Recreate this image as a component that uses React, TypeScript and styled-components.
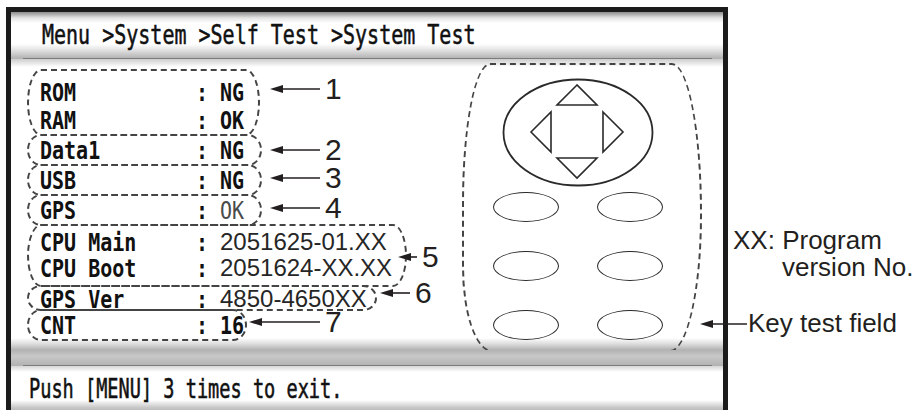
import React from 'react'
import styled, { createGlobalStyle } from 'styled-components'

type Kind = 'lcd' | 'thin' | 'plain'

type Row = {
  label: string
  value: string
  kind: Kind
}

type Group = {
  rows: Row[]
  w: number
  pt: number
  pb: number
  rowH: number
  callY: number
  gap: number
  len: number
  num: string
}

const groups: Group[] = [
  {
    rows: [
      { label: 'ROM', value: 'NG', kind: 'lcd' },
      { label: 'RAM', value: 'OK', kind: 'lcd' },
    ],
    w: 233, pt: 7, pb: 0, rowH: 28, callY: 7, gap: 10, len: 50, num: '1',
  },
  { rows: [{ label: 'Data1', value: 'NG', kind: 'lcd' }], w: 235, pt: 0, pb: 0, rowH: 28, callY: 3, gap: 8, len: 50, num: '2' },
  { rows: [{ label: 'USB', value: 'NG', kind: 'lcd' }], w: 235, pt: 0, pb: 0, rowH: 28, callY: 1, gap: 8, len: 50, num: '3' },
  { rows: [{ label: 'GPS', value: 'OK', kind: 'thin' }], w: 235, pt: 0, pb: 0, rowH: 28, callY: 1, gap: 8, len: 50, num: '4' },
  {
    rows: [
      { label: 'CPU Main', value: '2051625-01.XX', kind: 'plain' },
      { label: 'CPU Boot', value: '2051624-XX.XX', kind: 'plain' },
    ],
    w: 380, pt: 3, pb: 4, rowH: 26, callY: 20, gap: -9, len: 19, num: '5',
  },
  { rows: [{ label: 'GPS Ver', value: '4850-4650XX', kind: 'plain' }], w: 350, pt: 0, pb: 0, rowH: 22, callY: -5, gap: 3, len: 30, num: '6' },
  { rows: [{ label: 'CNT', value: '16', kind: 'lcd' }], w: 220, pt: 0, pb: 0, rowH: 28, callY: 0, gap: 2, len: 71, num: '7' },
]

const GlobalStyle = createGlobalStyle`
  html, body {
    margin: 0;
    padding: 0;
    background: #fff;
    overflow: hidden;
  }
  body {
    font-family: 'Liberation Sans', Arial, sans-serif;
    color: #231f20;
  }
`

const Arrow: React.FC<{ len: number }> = ({ len }) => (
  <svg width={len} height={10} viewBox={`0 0 ${len} 10`}>
    <line x1={10} y1={5} x2={len} y2={5} stroke="#231f20" strokeWidth={1.6} />
    <polygon points="0,5 13,1 13,9" fill="#231f20" />
  </svg>
)

const DPad = () => (
  <svg width={152} height={109} viewBox="0 0 152 109">
    <g fill="none" stroke="#2a2a2a" strokeWidth={1.6} strokeLinejoin="miter">
      <ellipse cx={76} cy={54.5} rx={74.5} ry={53} strokeWidth={1.8} />
      <polygon points="75,7 55,27 95,27" />
      <polygon points="55,80 95,80 75,100" />
      <polygon points="29,54 49,34 49,74" />
      <polygon points="101,34 121,54 101,74" />
    </g>
  </svg>
)

export default function App() {
  return (
    <Page>
      <GlobalStyle />
      <Frame>
        <Header>
          <Title>
            <Lcd $tall>Menu &gt;System &gt;Self Test &gt;System Test</Lcd>
          </Title>
          <Rule />
        </Header>
        <Body>
          <Groups>
            {groups.map((g) => (
              <GroupRow key={g.num}>
                <Box $w={g.w} $pt={g.pt} $pb={g.pb}>
                  {g.rows.map((r) => (
                    <ItemRow key={r.label} $h={g.rowH}>
                      <Lcd $bold>{r.label}</Lcd>
                      <Lcd $bold>:</Lcd>
                      {r.kind === 'plain' ? (
                        <Plain>{r.value}</Plain>
                      ) : (
                        <Lcd $bold={r.kind === 'lcd'} $thin={r.kind === 'thin'}>
                          {r.value}
                        </Lcd>
                      )}
                    </ItemRow>
                  ))}
                </Box>
                <Callout $y={g.callY} $gap={g.gap}>
                  <Arrow len={g.len} />
                  <Num>{g.num}</Num>
                </Callout>
              </GroupRow>
            ))}
          </Groups>
          <KeyPanel>
            <DPad />
            <Keys>
              {Array.from({ length: 6 }).map((_, i) => (
                <Key key={i} />
              ))}
            </Keys>
          </KeyPanel>
        </Body>
        <Footer>
          <FooterBand />
          <Rule />
          <FooterText>
            <Lcd $small>Push [MENU] 3 times to exit.</Lcd>
          </FooterText>
        </Footer>
      </Frame>
      <Notes>
        <NoteLine>XX: Program</NoteLine>
        <NoteLine $indent>version No.</NoteLine>
        <KeyNote>
          <Arrow len={47} />
          <span>Key test field</span>
        </KeyNote>
      </Notes>
    </Page>
  )
}

const Page = styled.div`
  display: flex;
  align-items: flex-start;
  height: 410px;
  box-sizing: border-box;
  padding: 7px 0 0 6px;
  overflow: hidden;
`

const Frame = styled.div`
  width: 722px;
  height: 403px;
  box-sizing: border-box;
  border: 5px solid #1b1b1b;
  border-bottom: none;
  display: flex;
  flex-direction: column;
  background: #fff;
  flex-shrink: 0;
`

const Header = styled.div`
  background: #b4b4b4;
`

const Title = styled.div`
  height: 46px;
  display: flex;
  align-items: center;
  padding-left: 31px;
  background: linear-gradient(
    to bottom,
    #8c8c8c 0,
    #e4e4e4 6px,
    #fff 11px,
    #fff 32px,
    #e2e2e2 38px,
    #b4b4b4 46px
  );
`

const Rule = styled.div`
  height: 1px;
  margin: 0 11px 0 12px;
  background: #7c7c7c;
`

const Lcd = styled.span<{ $bold?: boolean; $thin?: boolean; $small?: boolean; $tall?: boolean }>`
  display: inline-block;
  font-family: 'DejaVu Sans Mono', 'Liberation Mono', monospace;
  font-size: ${(p) => (p.$small ? '18.6px' : '20px')};
  font-weight: ${(p) => (p.$bold ? 700 : 400)};
  line-height: 1;
  white-space: pre;
  transform: scaleY(${(p) => (p.$small ? 1.4 : p.$tall ? 1.32 : 1.25)});
  color: ${(p) => (p.$thin ? '#4a4a4a' : '#111')};
  -webkit-text-stroke: ${(p) => (p.$bold || p.$thin ? '0' : '0.4px #111')};
`

const Plain = styled.span`
  font-family: 'Liberation Sans', Arial, sans-serif;
  font-size: 24px;
  line-height: 1;
  color: #262626;
  white-space: nowrap;
`

const Body = styled.div`
  height: 291px;
  display: flex;
  align-items: flex-start;
  padding-left: 16px;
  background: linear-gradient(
    to bottom,
    #cdcdcd 0,
    #fff 8px,
    #fff calc(100% - 12px),
    #dcdcdc calc(100% - 6px),
    #b2b2b2 100%
  );
`

const Groups = styled.div`
  width: 435px;
  padding-top: 10px;
  display: flex;
  flex-direction: column;
`

const GroupRow = styled.div`
  display: flex;
  align-items: flex-start;
  & + & {
    margin-top: -2px;
  }
`

const Box = styled.div<{ $w: number; $pt: number; $pb: number }>`
  width: ${(p) => p.$w}px;
  box-sizing: border-box;
  border: 2px dashed #444;
  border-radius: 14px / 50%;
  padding: ${(p) => p.$pt}px 0 ${(p) => p.$pb}px 11px;
  flex-shrink: 0;
`

const ItemRow = styled.div<{ $h: number }>`
  display: grid;
  grid-template-columns: 156px 24px auto;
  align-items: center;
  height: ${(p) => p.$h}px;
`

const Callout = styled.div<{ $y: number; $gap: number }>`
  display: flex;
  align-items: center;
  height: 26px;
  margin-top: ${(p) => p.$y}px;
  margin-left: ${(p) => p.$gap}px;
  position: relative;
`

const Num = styled.span`
  font-family: 'Liberation Sans', Arial, sans-serif;
  font-size: 30px;
  line-height: 26px;
  color: #231f20;
  margin-left: 5px;
`

const KeyPanel = styled.div`
  width: 240px;
  height: 289px;
  box-sizing: border-box;
  margin-top: 4px;
  border: 2px dashed #444;
  border-radius: 28px 30px 32px 30px / 140px 150px 137px 85px;
  padding: 13px 8px 0 0;
  display: flex;
  flex-direction: column;
  align-items: center;
`

const Keys = styled.div`
  margin-top: 5px;
  display: grid;
  grid-template-columns: 66px 66px;
  column-gap: 38px;
  row-gap: 29px;
`

const Key = styled.div`
  width: 66px;
  height: 30px;
  box-sizing: border-box;
  border: 1.8px solid #2a2a2a;
  border-radius: 50%;
`

const Footer = styled.div`
  background: #b2b2b2;
  flex: 1;
  display: flex;
  flex-direction: column;
`

const FooterBand = styled.div`
  height: 15px;
  background: linear-gradient(to bottom, #b2b2b2 0, #c8c8c8 6px, #b4b4b4 15px);
`

const FooterText = styled.div`
  height: 48px;
  display: flex;
  align-items: center;
  padding-left: 18px;
  background: linear-gradient(
    to bottom,
    #d6d6d6 0,
    #fff 6px,
    #fff 34px,
    #c4c4c4 42px,
    #b0b0b0 48px
  );
`

const Notes = styled.div`
  padding: 220px 0 0 5px;
  font-family: 'Liberation Sans', Arial, sans-serif;
  font-size: 26px;
  line-height: 27px;
  color: #231f20;
  white-space: nowrap;
`

const NoteLine = styled.div<{ $indent?: boolean }>`
  padding-left: ${(p) => (p.$indent ? '49px' : '0')};
`

const KeyNote = styled.div`
  display: flex;
  align-items: center;
  gap: 1px;
  margin-top: 29px;
  margin-left: -33px;
  position: relative;
  z-index: 1;
`
